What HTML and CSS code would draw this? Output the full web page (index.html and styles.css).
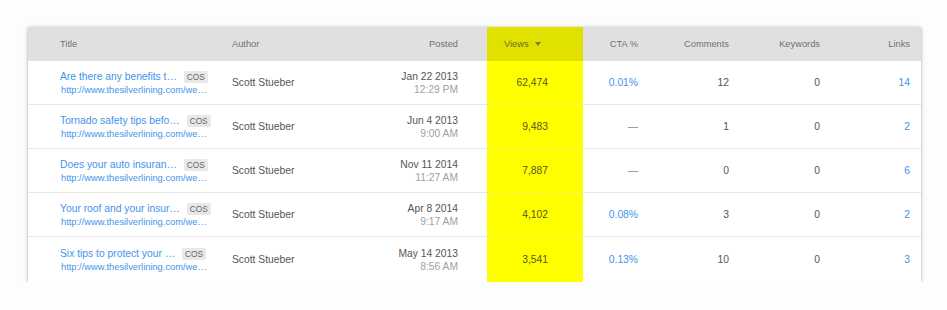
FILE: index.html
```html
<!DOCTYPE html>
<html>
<head>
<meta charset="utf-8">
<link rel="stylesheet" href="styles.css">
</head>
<body>
<div class="card">
<table class="grid">
<colgroup>
<col class="c-title"><col class="c-author"><col class="c-posted"><col class="c-views"><col class="c-cta"><col class="c-comments"><col class="c-keywords"><col class="c-links">
</colgroup>
<thead>
<tr>
<th class="title">Title</th>
<th class="author">Author</th>
<th class="num posted">Posted</th>
<th class="views">Views <span class="caret"></span></th>
<th class="num cta">CTA %</th>
<th class="num">Comments</th>
<th class="num">Keywords</th>
<th class="num links">Links</th>
</tr>
</thead>
<tbody>
<tr>
<td class="title"><div class="line"><a class="name">Are there any benefits t…</a><span class="badge">COS</span></div><a class="url">http://www.thesilverlining.com/we…</a></td>
<td class="author">Scott Stueber</td>
<td class="num posted"><div class="date">Jan 22 2013</div><div class="time">12:29 PM</div></td>
<td class="num views">62,474</td>
<td class="num cta"><a class="link">0.01%</a></td>
<td class="num">12</td>
<td class="num">0</td>
<td class="num links"><a class="link">14</a></td>
</tr>
<tr>
<td class="title"><div class="line"><a class="name">Tornado safety tips befo…</a><span class="badge">COS</span></div><a class="url">http://www.thesilverlining.com/we…</a></td>
<td class="author">Scott Stueber</td>
<td class="num posted"><div class="date">Jun 4 2013</div><div class="time">9:00 AM</div></td>
<td class="num views">9,483</td>
<td class="num cta"><span class="dash">—</span></td>
<td class="num">1</td>
<td class="num">0</td>
<td class="num links"><a class="link">2</a></td>
</tr>
<tr>
<td class="title"><div class="line"><a class="name">Does your auto insuran…</a><span class="badge">COS</span></div><a class="url">http://www.thesilverlining.com/we…</a></td>
<td class="author">Scott Stueber</td>
<td class="num posted"><div class="date">Nov 11 2014</div><div class="time">11:27 AM</div></td>
<td class="num views">7,887</td>
<td class="num cta"><span class="dash">—</span></td>
<td class="num">0</td>
<td class="num">0</td>
<td class="num links"><a class="link">6</a></td>
</tr>
<tr>
<td class="title"><div class="line"><a class="name">Your roof and your insur…</a><span class="badge">COS</span></div><a class="url">http://www.thesilverlining.com/we…</a></td>
<td class="author">Scott Stueber</td>
<td class="num posted"><div class="date">Apr 8 2014</div><div class="time">9:17 AM</div></td>
<td class="num views">4,102</td>
<td class="num cta"><a class="link">0.08%</a></td>
<td class="num">3</td>
<td class="num">0</td>
<td class="num links"><a class="link">2</a></td>
</tr>
<tr>
<td class="title"><div class="line"><a class="name">Six tips to protect your …</a><span class="badge">COS</span></div><a class="url">http://www.thesilverlining.com/we…</a></td>
<td class="author">Scott Stueber</td>
<td class="num posted"><div class="date">May 14 2013</div><div class="time">8:56 AM</div></td>
<td class="num views">3,541</td>
<td class="num cta"><a class="link">0.13%</a></td>
<td class="num">10</td>
<td class="num">0</td>
<td class="num links"><a class="link">3</a></td>
</tr>
</tbody>
</table>
</div>
</body>
</html>
```
FILE: styles.css
```css
html, body {
  margin: 0;
  background: #fdfdfd;
}
body {
  font-family: "Liberation Sans", Arial, sans-serif;
  color: #555;
}
.card {
  margin: 27px 0 0 28px;
  width: 893px;
  background: #fff;
  box-shadow: 0 1px 4px rgba(0, 0, 0, 0.28), 0 0 1px rgba(0, 0, 0, 0.15);
}
.grid {
  width: 893px;
  table-layout: fixed;
  border-collapse: separate;
  border-spacing: 0;
}
.c-title { width: 192px; }
.c-author { width: 152px; }
.c-posted { width: 115px; }
.c-views { width: 96px; }
.c-cta { width: 67px; }
.c-comments { width: 91px; }
.c-keywords { width: 91px; }
.c-links { width: 89px; }

th {
  height: 34px;
  padding: 0 12px;
  background: #e0e0e0;
  font-weight: normal;
  font-size: 9.3px;
  color: #707070;
  text-align: left;
  white-space: nowrap;
}
td {
  height: 43px;
  padding: 0 12px;
  border-bottom: 1px solid #e6e6e6;
  font-size: 10.3px;
  white-space: nowrap;
  vertical-align: middle;
}
tbody tr:last-child td { height: 45px; border-bottom: none; }
.num { text-align: right; }
.title { padding-left: 32px; padding-right: 0; overflow: hidden; }
.posted { padding-right: 29px; }
th.views {
  background: #e1e100;
  padding-left: 17px;
  color: #6e6e22;
}
td.views {
  background: #ffff00;
  padding-right: 35px;
  color: #55551c;
  border-bottom: 1px dashed #f0f070;
}
.caret {
  display: inline-block;
  width: 0;
  height: 0;
  margin-left: 4px;
  border-left: 3px solid transparent;
  border-right: 3px solid transparent;
  border-top: 4px solid #7a7a2a;
  vertical-align: 1px;
}
.links { padding-right: 11px; }

.line {
  display: flex;
  align-items: center;
  gap: 7px;
  height: 14px;
}
.name {
  color: #3f94ec;
  font-size: 10.3px;
}
.badge {
  display: inline-block;
  background: #e8e8e8;
  color: #666;
  font-size: 8.3px;
  line-height: 12px;
  padding: 0 3px;
  border-radius: 2px;
}
.url {
  display: block;
  color: #3f94ec;
  font-size: 9.3px;
  line-height: 12px;
  margin-left: 1px;
}
td.author { color: #555; }
.date { color: #555; line-height: 13px; }
.time { color: #a0a0a0; line-height: 13px; }
.link { color: #3f94ec; }
.dash { color: #8a8a8a; }
```
